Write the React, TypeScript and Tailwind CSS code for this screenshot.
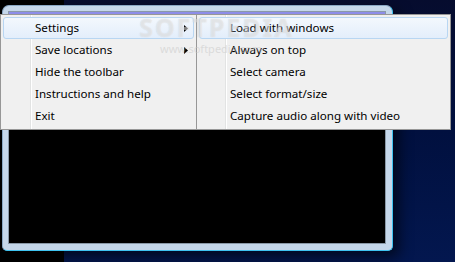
import React from 'react';

interface MenuItem {
  label: string;
  sub?: boolean;
}

const mainItems: MenuItem[] = [
  { label: 'Settings', sub: true },
  { label: 'Save locations', sub: true },
  { label: 'Hide the toolbar' },
  { label: 'Instructions and help' },
  { label: 'Exit' },
];

const settingsItems: MenuItem[] = [
  { label: 'Load with windows' },
  { label: 'Always on top' },
  { label: 'Select camera' },
  { label: 'Select format/size' },
  { label: 'Capture audio along with video' },
];

function Arrow() {
  return (
    <svg width="4" height="7" viewBox="0 0 4 7" className="mr-[5px] shrink-0">
      <path d="M0 0 L4 3.5 L0 7 Z" fill="#000" />
    </svg>
  );
}

// popup menu, Win7 style: gutter line on the left, first item hot
function Menu({ items, narrow, className }: { items: MenuItem[]; narrow?: boolean; className: string }) {
  return (
    <div className={`absolute top-[14px] h-[116px] bg-[#f0f0f0] border border-[#979797] pt-[2px] flex flex-col ${className}`}>
      <div className={`absolute top-0 bottom-0 ${narrow ? 'left-[28px]' : 'left-[29px]'} w-[2px] border-l border-[#e2e3e3] bg-white`} />
      {items.map((item, i) => (
        <div
          key={item.label}
          className={`relative h-[22px] mx-[2px] flex items-center rounded-[3px] border ${
            i === 0 ? 'border-[#b8d6f2] bg-gradient-to-b from-[#f3f8fd] to-[#e3eefb]' : 'border-transparent'
          }`}
        >
          <span className={`${narrow ? 'pl-[30px]' : 'pl-[31px]'} flex-1 text-[11.6px] leading-[16px] text-black whitespace-nowrap`}>
            {item.label}
          </span>
          {item.sub && <Arrow />}
        </div>
      ))}
    </div>
  );
}

export default function App(): JSX.Element {
  return (
    <div
      className="relative w-[455px] h-[262px] overflow-hidden flex"
      style={{ fontFamily: '"Segoe UI", "Noto Sans", "Open Sans", sans-serif' }}
    >
      <div className="w-[64px] h-full bg-black" />
      <div className="flex-1 h-full bg-gradient-to-b from-[#060c2e] via-[#01103f] to-[#03174f]" />

      {/* window */}
      <div className="absolute left-[2px] top-[5px] w-[391px] h-[246px] rounded-t-[7px] rounded-b-[5px] bg-[#c5d7ea] border border-[#8aa8c4] border-r-[#3fc3f0] border-b-[#3fc3f0] shadow-[6px_6px_14px_rgba(0,0,0,0.6)] p-[5px] pr-[6px] pb-[6px]">
        <div className="w-full h-full bg-black border border-[#8a99a8] flex flex-col">
          <div className="h-[4px] bg-[#8d8de9]" />
        </div>
      </div>

      <Menu items={mainItems} className="left-0 w-[197px]" />
      <Menu items={settingsItems} narrow className="left-[196px] w-[255px]" />

      {/* watermark */}
      <div className="absolute left-[139px] top-[12px] flex flex-col items-start pointer-events-none">
        <span className="text-[25px] leading-[30px] font-bold tracking-[2px] text-white/40 [text-shadow:0_0_1px_rgba(150,150,150,0.35)]">
          SOFTPEDIA
        </span>
        <span className="ml-[21px] text-[11px] leading-[14px] text-[#c4c4c4]/50">www.softpedia.com</span>
      </div>
    </div>
  );
}
